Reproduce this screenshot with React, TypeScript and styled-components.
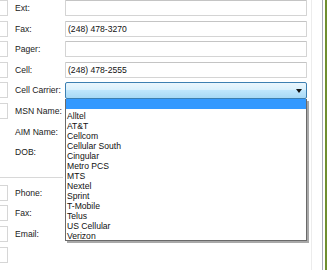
import React from "react";
import styled, { createGlobalStyle } from "styled-components";

const Global = createGlobalStyle`
  html, body { margin: 0; padding: 0; background: #ffffff; }
  body { font-family: "Liberation Sans", Arial, sans-serif; }
`;

const Screen = styled.div`
  width: 329px;
  height: 270px;
  overflow: hidden;
  display: flex;
  background: #ffffff;
  position: relative;
`;

const FormPanel = styled.div`
  width: 311px;
  flex: none;
  border-right: 1px solid #ececec;
  position: relative;
`;

const FrameGap = styled.div`
  width: 10px;
  flex: none;
`;

const FrameLine = styled.div<{ $color: string; $w: number }>`
  width: ${(p) => p.$w}px;
  flex: none;
  background: ${(p) => p.$color};
`;

const Grid = styled.div<{ $top: number }>`
  display: grid;
  grid-template-columns: 8px 57px 242px;
  grid-auto-rows: 20.6px;
  margin-top: ${(p) => p.$top}px;
  align-items: start;
`;

const Stub = styled.div`
  height: 16px;
  box-sizing: border-box;
  border: 1px solid #d6d6d6;
  border-left: none;
  background: #fff;
`;

const Blank = styled.div``;

const Label = styled.div`
  padding-left: 7px;
  font-size: 8.6px;
  line-height: 16px;
  color: #1a1a1a;
  white-space: nowrap;
`;

const TextBox = styled.div`
  height: 16px;
  box-sizing: border-box;
  border: 1px solid #d4d4d4;
  border-top-color: #c4c4c4;
  border-radius: 1px;
  padding-left: 2px;
  font-size: 8.6px;
  line-height: 14px;
  color: #111;
  background: #fff;
`;

const Select = styled.div`
  height: 17px;
  box-sizing: border-box;
  border: 1px solid #3c7fb1;
  border-radius: 2px;
  background: linear-gradient(
    to bottom,
    #eaf6fd 0%,
    #d9f0fc 45%,
    #bee6fd 50%,
    #a7d9f5 100%
  );
  display: flex;
  justify-content: flex-end;
  align-items: center;
  padding-right: 4px;
`;

const Separator = styled.div`
  width: 63px;
  height: 1px;
  background: #d8d8d8;
  margin-top: 12px;
`;

const Dropdown = styled.div`
  position: absolute;
  left: 65px;
  top: 99px;
  width: 242px;
  height: 142px;
  box-sizing: border-box;
  background: #fff;
  border: 1px solid #6a6a6a;
  border-top: none;
  box-shadow: 2px 2px 0 #a8a8a8;
  display: flex;
  flex-direction: column;
`;

const Option = styled.div<{ $selected?: boolean }>`
  height: 10px;
  flex: none;
  padding-left: 1px;
  font-size: 8.6px;
  line-height: 10px;
  color: ${(p) => (p.$selected ? "#fff" : "#111")};
  background: ${(p) => (p.$selected ? "#3399ff" : "transparent")};
  white-space: nowrap;
`;

const Spacer = styled.div`
  height: 2px;
  flex: none;
`;

const topRows: { label: string; kind: "text" | "select"; value?: string; stub: boolean }[] = [
  { label: "Ext:", kind: "text", stub: true },
  { label: "Fax:", kind: "text", value: "(248) 478-3270", stub: true },
  { label: "Pager:", kind: "text", stub: true },
  { label: "Cell:", kind: "text", value: "(248) 478-2555", stub: true },
  { label: "Cell Carrier:", kind: "select", stub: true },
  { label: "MSN Name:", kind: "text", stub: true },
  { label: "AIM Name:", kind: "text", stub: false },
  { label: "DOB:", kind: "text", stub: false },
];

const bottomRows = [
  { label: "Phone:" },
  { label: "Fax:" },
  { label: "Email:" },
  { label: "" },
];

const carriers = [
  "Alltel",
  "AT&T",
  "Cellcom",
  "Cellular South",
  "Cingular",
  "Metro PCS",
  "MTS",
  "Nextel",
  "Sprint",
  "T-Mobile",
  "Telus",
  "US Cellular",
  "Verizon",
];

export default function App() {
  return (
    <>
      <Global />
      <Screen>
        <FormPanel>
          <Grid $top={0}>
            {topRows.map((r) => (
              <React.Fragment key={r.label}>
                {r.stub ? <Stub /> : <Blank />}
                <Label>{r.label}</Label>
                {r.kind === "select" ? (
                  <Select>
                    <svg width="6" height="4" viewBox="0 0 6 4">
                      <path d="M0 0h6L3 4z" fill="#111" />
                    </svg>
                  </Select>
                ) : (
                  <TextBox>{r.value ?? ""}</TextBox>
                )}
              </React.Fragment>
            ))}
          </Grid>
          <Separator />
          <Grid $top={7}>
            {bottomRows.map((r, i) => (
              <React.Fragment key={i}>
                <Stub />
                <Label>{r.label}</Label>
                <Blank />
              </React.Fragment>
            ))}
          </Grid>
          <Dropdown>
            <Option $selected>&nbsp;</Option>
            <Spacer />
            {carriers.map((c) => (
              <Option key={c}>{c}</Option>
            ))}
          </Dropdown>
        </FormPanel>
        <FrameGap />
        <FrameLine $color="#a9adb8" $w={1} />
        <FrameLine $color="#ffffff" $w={2} />
        <FrameLine $color="#6f8f2f" $w={2} />
      </Screen>
    </>
  );
}
